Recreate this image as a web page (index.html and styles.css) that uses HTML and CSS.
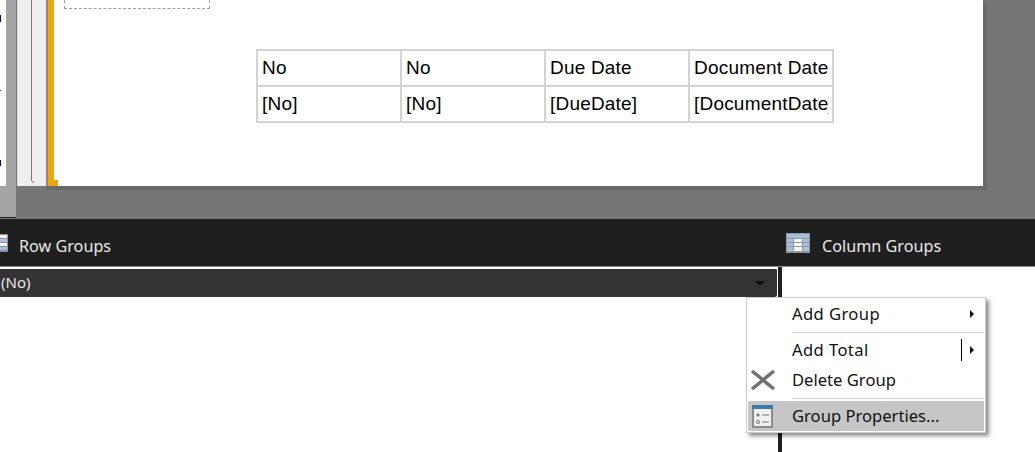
FILE: index.html
```html
<!DOCTYPE html>
<html lang="en">
<head>
  <meta charset="UTF-8">
  <title>Row Groups</title>
  <link rel="stylesheet" href="styles.css">
</head>
<body>
  <div class="design">
    <div class="side">
      <div class="code-strip">
        <span class="speck speck-blue"></span>
        <span class="speck speck-dark"></span>
        <span class="speck speck-blue2"></span>
      </div>
      <div class="scroll-strip"></div>
    </div>
    <div class="surface">
      <div class="page">
        <div class="ruler"><div class="ruler-line"></div></div>
        <div class="sheet">
          <div class="marker"></div>
          <div class="report">
            <div class="dashed-box"></div>
            <table class="report-table">
              <tr>
                <td><div class="cell">No</div></td>
                <td><div class="cell">No</div></td>
                <td><div class="cell">Due Date</div></td>
                <td><div class="cell">Document Date</div></td>
              </tr>
              <tr>
                <td><div class="cell">[No]</div></td>
                <td><div class="cell">[No]</div></td>
                <td><div class="cell">[DueDate]</div></td>
                <td><div class="cell">[DocumentDate]</div></td>
              </tr>
            </table>
          </div>
        </div>
      </div>
    </div>
  </div>

  <div class="groups-bar">
    <div class="groups-title row-title">
      <svg class="icon-rows" width="8" height="18" viewBox="0 0 8 18">
        <rect width="8" height="18" fill="#8a9299"/>
        <rect y="1" width="7" height="3" fill="#f2f2f2"/>
        <rect y="5" width="7" height="3" fill="#a9c0d8"/>
        <rect y="9" width="7" height="3" fill="#f2f2f2"/>
        <rect y="13" width="7" height="3" fill="#a9c0d8"/>
      </svg>
      <span class="title-text">Row Groups</span>
    </div>
    <div class="groups-title col-title">
      <svg class="icon-cols" width="24" height="20" viewBox="0 0 24 20">
        <rect width="24" height="20" fill="#8d98a3"/>
        <rect x="1" y="1" width="22" height="4" fill="#a9bfd6"/>
        <g fill="#a9bfd6">
          <rect x="1" y="6" width="6" height="3"/>
          <rect x="17" y="6" width="6" height="3"/>
          <rect x="1" y="10" width="6" height="3"/>
          <rect x="17" y="10" width="6" height="3"/>
          <rect x="1" y="14" width="6" height="4"/>
          <rect x="17" y="14" width="6" height="4"/>
        </g>
        <g fill="#f4f4f4">
          <rect x="8" y="6" width="8" height="3"/>
          <rect x="8" y="10" width="8" height="3"/>
          <rect x="8" y="14" width="8" height="4"/>
        </g>
      </svg>
      <span class="title-text">Column Groups</span>
    </div>
  </div>

  <div class="groups-body">
    <div class="row-pane">
      <div class="group-row">
        <span class="group-name">(No)</span>
        <span class="arrow-down"></span>
      </div>
    </div>
    <div class="divider"></div>
  </div>

  <div class="menu">
    <div class="menu-item">
      <span class="menu-icon"></span>
      <span class="menu-label label-wide">Add Group</span>
      <span class="arrow-right"></span>
    </div>
    <div class="menu-sep"></div>
    <div class="menu-item">
      <span class="menu-icon"></span>
      <span class="menu-label label-wide">Add Total</span>
      <span class="caret"></span>
      <span class="arrow-right"></span>
    </div>
    <div class="menu-item">
      <span class="menu-icon">
        <svg width="26" height="22" viewBox="0 0 26 22">
          <path d="M2 2 L24 20 M24 2 L2 20" stroke="#707070" stroke-width="3.4" fill="none"/>
        </svg>
      </span>
      <span class="menu-label">Delete Group</span>
    </div>
    <div class="menu-sep"></div>
    <div class="menu-item item-active">
      <span class="menu-icon">
        <svg width="21" height="23" viewBox="0 0 21 23">
          <rect x="1" y="1" width="19" height="21" fill="#eef0f2" stroke="#8c8c8c" stroke-width="2"/>
          <rect width="21" height="4" fill="#3f77b0"/>
          <circle cx="6" cy="10" r="1.6" fill="#777"/>
          <circle cx="6" cy="17" r="1.6" fill="none" stroke="#777"/>
          <path d="M10 10h7M10 17h7" stroke="#777" stroke-width="1.2"/>
        </svg>
      </span>
      <span class="menu-label">Group Properties...</span>
    </div>
  </div>
</body>
</html>
```

FILE: styles.css
```css
html, body {
  margin: 0;
  padding: 0;
  height: 452px;
  overflow: hidden;
  background-color: #ffffff;
  font-family: 'Noto Sans', 'Open Sans', sans-serif;
}

.design {
  display: flex;
  height: 219px;
  background-color: #767676;
}

/* left edge */
.side {
  display: flex;
  width: 16px;
  flex-shrink: 0;
  height: 217px;
  border-bottom: 1px solid #1f1f1f;
  background-color: #a5a5a5;
}

.code-strip {
  position: relative;
  width: 6px;
  height: 186px;
  background-color: #ffffff;
}

.speck {
  position: absolute;
  left: 0;
  width: 1px;
}

.speck-blue {
  top: 15px;
  height: 7px;
  background-color: #00008b;
}

.speck-dark {
  top: 90px;
  height: 1px;
  background-color: #333333;
}

.speck-blue2 {
  top: 160px;
  height: 6px;
  background-color: #00008b;
}

.surface {
  flex: 1;
  padding-right: 52px;
}

.page {
  display: flex;
  height: 186px;
}

.ruler {
  width: 28px;
  margin-left: 1px;
  border-left: 1px solid #dddddd;
  background-color: #eeeeee;
}

.ruler-line {
  position: relative;
  width: 1px;
  height: 181px;
  margin-left: 13px;
  background-color: #777777;
}

.ruler-line::after {
  content: "";
  position: absolute;
  left: 1px;
  bottom: -2px;
  width: 2px;
  height: 2px;
  background-color: #aaaaaa;
}

.sheet {
  display: flex;
  flex: 1;
  border-left: 2px solid #8a8a8a;
  background-color: #ffffff;
  box-shadow: 4px 4px 0 #6a6a6a, 0 4px 0 #6a6a6a;
}

.marker {
  width: 6px;
  background-color: #eda60f;
  position: relative;
}

.marker::after {
  content: "";
  position: absolute;
  left: 0;
  bottom: 0;
  width: 10px;
  height: 6px;
  background-color: #eda60f;
}

.report {
  flex: 1;
  padding-left: 10px;
}

.dashed-box {
  width: 144px;
  height: 8px;
  border: 1px dashed #a0a0a0;
  border-top: 0;
}

.report-table {
  border-collapse: collapse;
  table-layout: fixed;
  width: 578px;
  margin: 40px 0 0 192px;
  font-family: 'Liberation Sans', Arial, sans-serif;
  font-size: 19px;
  letter-spacing: 0.2px;
  color: #000000;
}

.report-table td {
  box-sizing: border-box;
  height: 36px;
  padding: 0 3px 0 4px;
  border: 2px solid #d3d3d3;
}

.cell {
  overflow: hidden;
  white-space: nowrap;
}

/* group panes */
.groups-bar {
  display: flex;
  height: 47px;
  background-color: #1f1f1f;
  color: #e8e8e8;
  font-size: 16.2px;
}

.groups-title {
  display: flex;
  align-items: center;
}

.title-text {
  margin-top: 6px;
}

.row-title {
  width: 786px;
  gap: 11px;
}

.col-title {
  gap: 12px;
}

.groups-body {
  display: flex;
  height: 186px;
  border-top: 1px solid #8a8a8a;
}

.row-pane {
  width: 778px;
}

.group-row {
  display: flex;
  align-items: center;
  justify-content: space-between;
  height: 28px;
  border-top: 2px solid #ffffff;
  border-right: 1px solid #ffffff;
  border-radius: 0 3px 3px 0;
  padding: 0 12px 0 1px;
  background-color: #333333;
  color: #e8e8e8;
  font-size: 15px;
}

.group-name {
  padding-bottom: 2px;
}

.arrow-down {
  width: 0;
  height: 0;
  border-left: 5px solid transparent;
  border-right: 5px solid transparent;
  border-top: 5px solid #111111;
}

.divider {
  width: 4px;
  background-color: #1f1f1f;
}

/* context menu */
.menu {
  position: absolute;
  left: 746px;
  top: 297px;
  width: 236px;
  padding: 1px;
  border: 1px solid #cccccc;
  background-color: #ffffff;
  box-shadow: 3px 3px 4px rgba(0, 0, 0, 0.45);
  color: #111111;
  font-size: 16.6px;
}

.menu-item {
  display: flex;
  align-items: center;
  height: 30px;
  padding-right: 10px;
}

.menu-icon {
  display: flex;
  justify-content: center;
  width: 29px;
  margin-right: 15px;
}

.menu-label {
  flex: 1;
  padding-bottom: 2px;
}

.label-wide {
  letter-spacing: 0.4px;
}

.menu-sep {
  height: 1px;
  margin: 3px 0 2px 44px;
  background-color: #cfcfcf;
}

.item-active {
  background-color: #c6c6c6;
}

.caret {
  width: 1px;
  height: 22px;
  margin-right: 8px;
  background-color: #000000;
}

.arrow-right {
  width: 0;
  height: 0;
  border-top: 4px solid transparent;
  border-bottom: 4px solid transparent;
  border-left: 4px solid #111111;
}
```
